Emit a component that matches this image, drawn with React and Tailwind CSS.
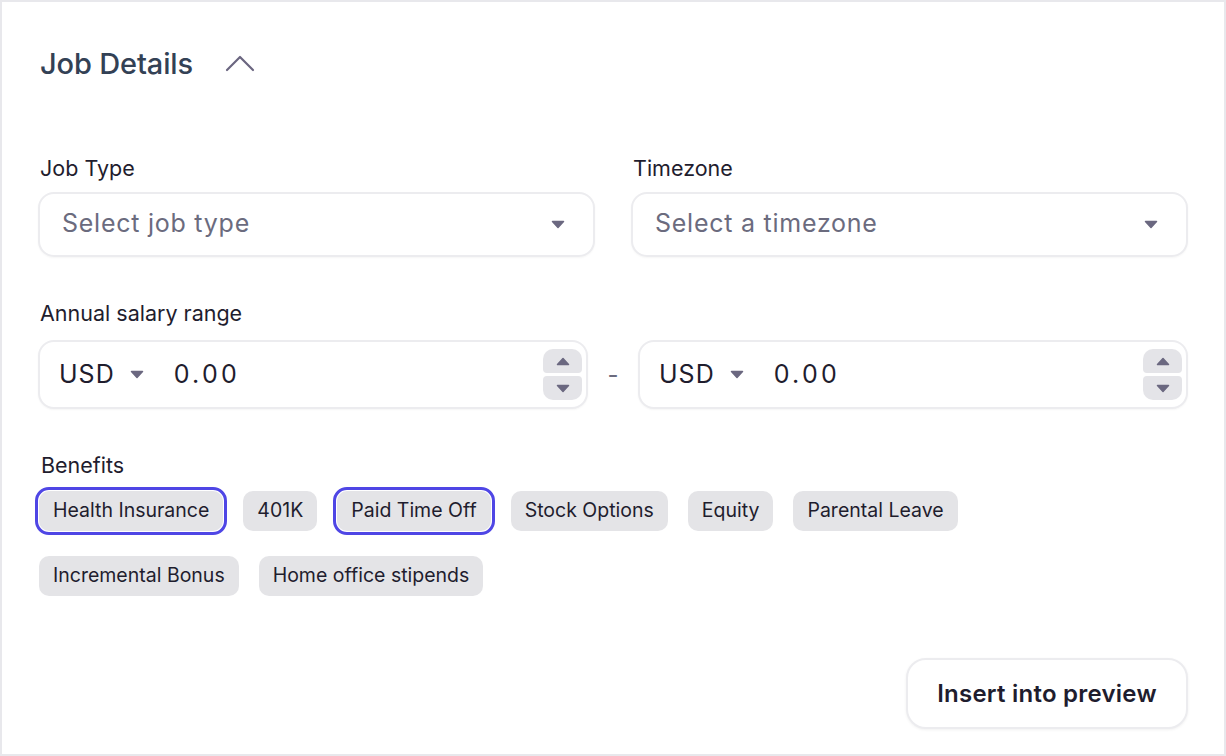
const benefits = [
  { label: 'Health Insurance', on: true },
  { label: '401K' },
  { label: 'Paid Time Off', on: true },
  { label: 'Stock Options' },
  { label: 'Equity' },
  { label: 'Parental Leave' },
  { label: 'Incremental Bonus' },
  { label: 'Home office stipends' },
]

function Caret({ className = '' }) {
  return (
    <svg width="14" height="9" viewBox="0 0 14 9" className={className}>
      <path d="M1.5 1.5h11L7 7.5z" fill="#6b6880" stroke="#6b6880" strokeWidth="1.5" strokeLinejoin="round" />
    </svg>
  )
}

function SelectBox({ label, placeholder }) {
  return (
    <div className="flex flex-col">
      <span className="text-[21.5px] text-[#1f1d2e] leading-none mb-[12px] pl-[2px]">{label}</span>
      <div className="flex h-[65px] items-center justify-between rounded-[16px] border-2 border-[#ececef] bg-white pl-[22px] pr-[28px] shadow-[0_1px_2px_rgba(0,0,0,0.04)]">
        <span className="text-[25px] tracking-[0.03em] text-[#6b6b7e]">{placeholder}</span>
        <Caret />
      </div>
    </div>
  )
}

function MoneyInput() {
  return (
    <div className="flex h-[69px] flex-1 items-center rounded-[16px] border-2 border-[#ececef] bg-white pl-[19px] pr-[4px] shadow-[0_1px_2px_rgba(0,0,0,0.04)]">
      <span className="text-[25px] tracking-[0.04em] text-[#1f1d2e]">USD</span>
      <Caret className="ml-[15px]" />
      <span className="ml-[30px] flex-1 text-[25px] tracking-[0.13em] text-[#1f1d2e]">0.00</span>
      <div className="flex flex-col gap-[3px]">
        <div className="flex h-[24px] w-[39px] items-center justify-center rounded-t-[10px] rounded-b-[4px] bg-[#e4e4e8]">
          <svg width="14" height="9" viewBox="0 0 14 9">
            <path d="M1.5 7.5h11L7 1.5z" fill="#6b6880" stroke="#6b6880" strokeWidth="1.5" strokeLinejoin="round" />
          </svg>
        </div>
        <div className="flex h-[24px] w-[39px] items-center justify-center rounded-b-[10px] rounded-t-[4px] bg-[#e4e4e8]">
          <Caret />
        </div>
      </div>
    </div>
  )
}

export default function App() {
  return (
    <div
      className="h-[756px] w-[1226px] overflow-hidden border-2 border-[#e8e8ec] bg-white"
      style={{ fontFamily: 'Inter, "Noto Sans", sans-serif' }}
    >
      <div className="flex h-full flex-col px-[36px] pt-[42px] pb-[25px]">
        <div className="flex items-center gap-[32px] pl-[2px]">
          <h2 className="text-[29px] font-medium leading-[40px] tracking-[-0.005em] text-[#334155]">Job Details</h2>
          <svg width="30" height="20" viewBox="0 0 30 20" className="-mt-[2px]">
            <path d="M2 17 15 4l13 13" fill="none" stroke="#6b6680" strokeWidth="2.2" strokeLinecap="round" strokeLinejoin="round" />
          </svg>
        </div>

        <div className="mt-[74px] grid grid-cols-2 gap-[36px]">
          <SelectBox label="Job Type" placeholder="Select job type" />
          <SelectBox label="Timezone" placeholder="Select a timezone" />
        </div>

        <div className="mt-[46px] flex flex-col">
          <span className="text-[21.5px] text-[#1f1d2e] leading-none mb-[16px] pl-[2px]">Annual salary range</span>
          <div className="flex items-center">
            <MoneyInput />
            <span className="w-[50px] text-center text-[24px] text-[#6b6b7e]">-</span>
            <MoneyInput />
          </div>
        </div>

        <div className="mt-[46px] flex flex-col">
          <span className="text-[21.5px] text-[#1f1d2e] leading-none mb-[14px] pl-[3px]">Benefits</span>
          <div className="flex max-w-[1080px] flex-wrap gap-x-[20px] gap-y-[25px] pl-[1px]">
            {benefits.map((b) => (
              <span
                key={b.label}
                className={
                  'flex h-[40px] items-center rounded-[10px] bg-[#e4e4e7] px-[14px] text-[19.5px] text-[#1f1d2e] ' +
                  (b.on ? 'outline-[3px] outline-offset-1 outline-[#4f46e5] outline-solid' : '')
                }
              >
                {b.label}
              </span>
            ))}
          </div>
        </div>

        <div className="mt-auto flex justify-end">
          <button className="h-[71px] w-[282px] rounded-[20px] border-2 border-[#ececef] bg-white text-[24px] font-semibold tracking-[0.01em] text-[#1f1d2e] shadow-[0_1px_3px_rgba(0,0,0,0.06)]">
            Insert into preview
          </button>
        </div>
      </div>
    </div>
  )
}
